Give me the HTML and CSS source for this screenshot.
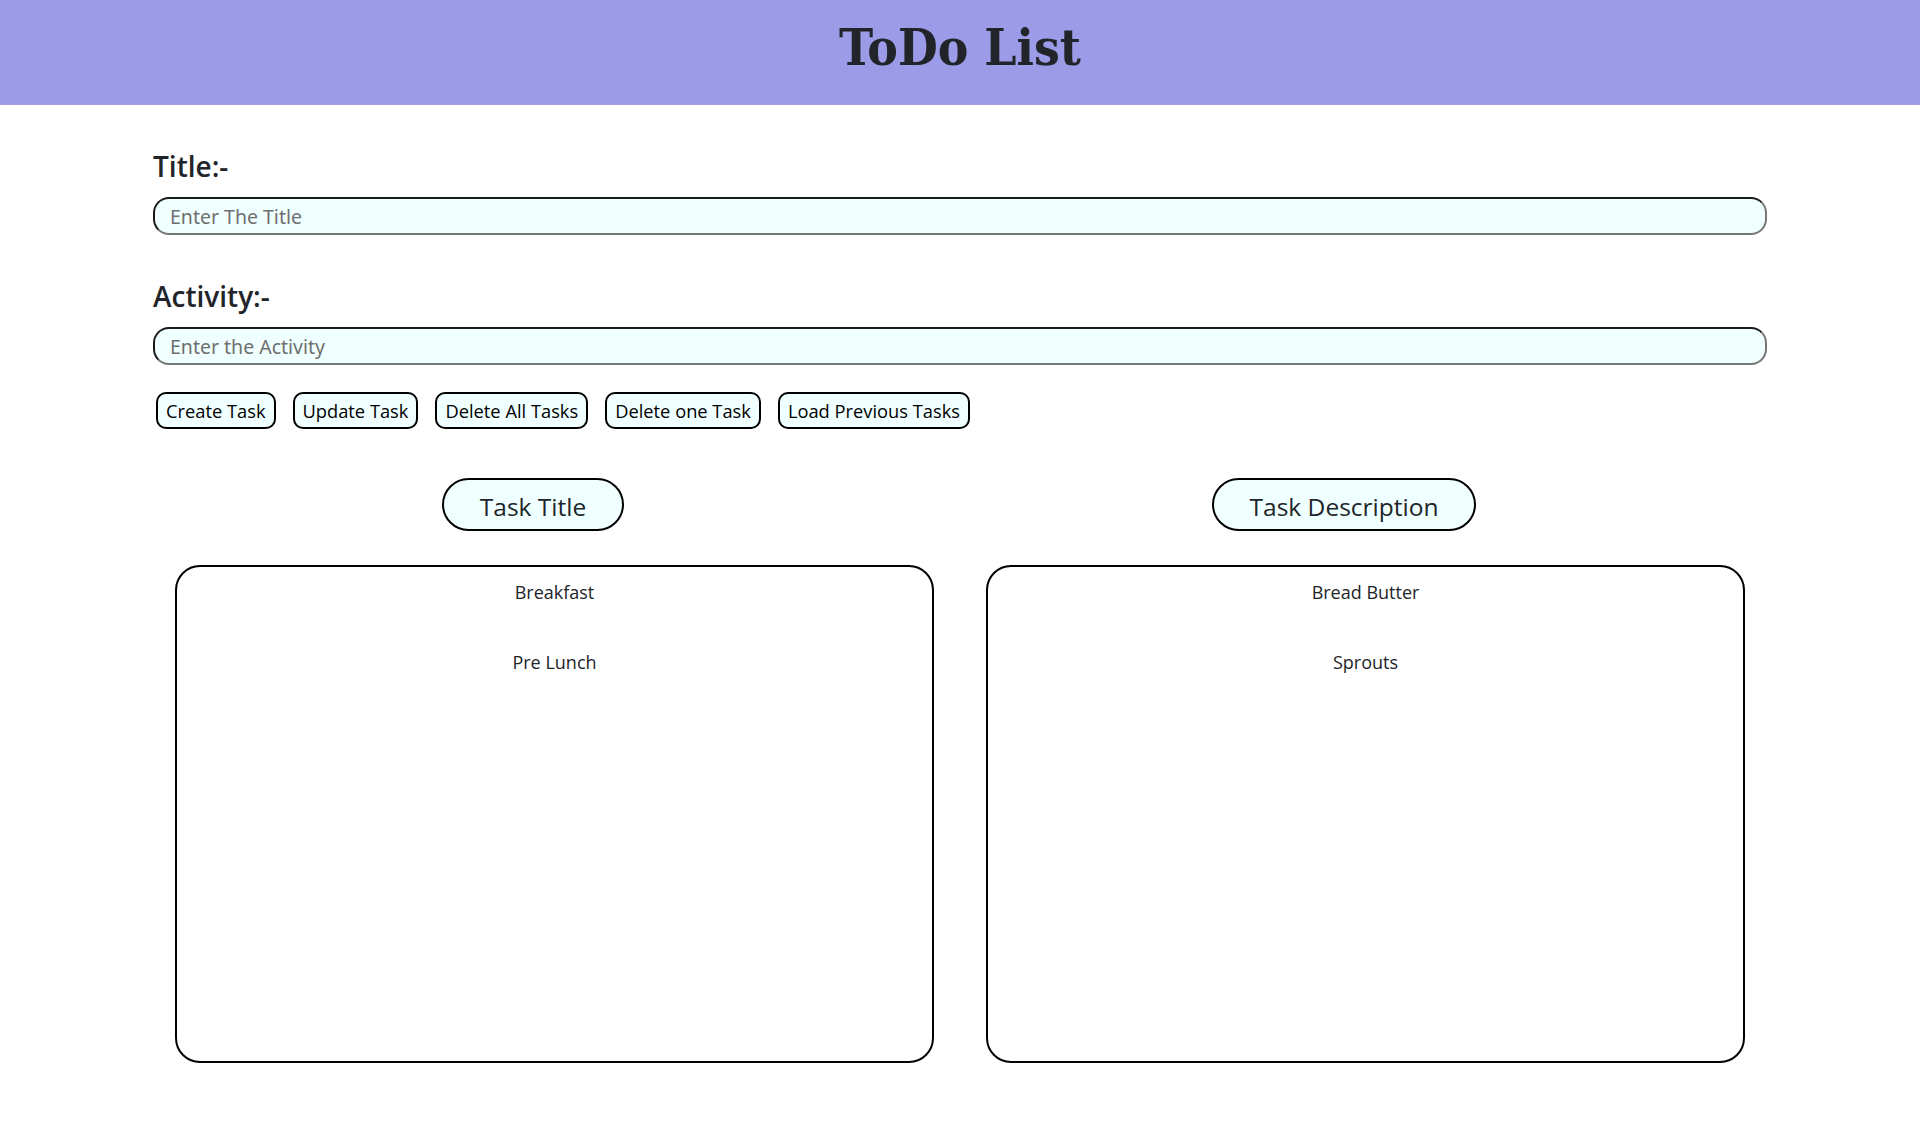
FILE: index.html
```html
<!DOCTYPE html>
<html lang="en">
<head>
<meta charset="utf-8">
<title>ToDo List</title>
<link rel="stylesheet" href="styles.css">
</head>
<body>
<header class="header">
  <h1 class="header-title">ToDo List</h1>
</header>
<main class="container">
  <label class="field-label" for="title">Title:-</label>
  <input class="field-input" id="title" type="text" placeholder="Enter The Title">
  <label class="field-label field-label-second" for="activity">Activity:-</label>
  <input class="field-input" id="activity" type="text" placeholder="Enter the Activity">
  <div class="actions">
    <button class="action-btn">Create Task</button>
    <button class="action-btn">Update Task</button>
    <button class="action-btn">Delete All Tasks</button>
    <button class="action-btn">Delete one Task</button>
    <button class="action-btn">Load Previous Tasks</button>
  </div>
  <div class="lists">
    <div class="list-head"><span class="pill">Task Title</span></div>
    <div class="list-head"><span class="pill">Task Description</span></div>
    <div class="list-box">
      <p class="list-item">Breakfast</p>
      <p class="list-item">Pre Lunch</p>
    </div>
    <div class="list-box">
      <p class="list-item">Bread Butter</p>
      <p class="list-item">Sprouts</p>
    </div>
  </div>
</main>
</body>
</html>
```
FILE: styles.css
```css
* { box-sizing: border-box; }

body {
  margin: 0;
  background: #ffffff;
  color: #212529;
  font-family: "Open Sans", "Noto Sans", sans-serif;
}

.header {
  height: 105px;
  background: #9b9be7;
  text-align: center;
}

.header-title {
  margin: 0;
  padding-top: 22px;
  font-family: "DejaVu Serif Condensed", "DejaVu Serif", serif;
  font-stretch: condensed;
  font-weight: 700;
  font-size: 51px;
  line-height: 51px;
  color: #212529;
}

.container {
  margin: 0 153px;
}

.field-label {
  display: block;
  margin-top: 44px;
  font-family: "Open Sans", "Noto Sans", sans-serif;
  font-weight: 600;
  font-size: 28px;
  line-height: 35px;
  color: #212529;
}

.field-input {
  display: block;
  width: 100%;
  height: 38px;
  margin-top: 13px;
  padding: 0 15px;
  border: 2px solid;
  border-color: #1a1a1a #767676 #767676 #1a1a1a;
  border-radius: 16px;
  background: #f0ffff;
  font-family: "Noto Sans", sans-serif;
  font-size: 19.5px;
  color: #212529;
  outline: none;
}

.field-input::placeholder {
  color: #6f6f6f;
}

.actions {
  display: flex;
  gap: 17px;
  margin-top: 27px;
  padding-left: 3px;
}

.action-btn {
  height: 37px;
  padding: 0 8px;
  border: 2px solid #000;
  border-radius: 10px;
  background: #f0ffff;
  font-family: "Open Sans", sans-serif;
  font-size: 18.3px;
  line-height: 25px;
  color: #000;
}

.lists {
  display: grid;
  grid-template-columns: 1fr 1fr;
  column-gap: 52px;
  padding: 0 22px;
  margin-top: 49px;
}

.list-head {
  display: flex;
  justify-content: center;
  padding-right: 43px;
}

.pill {
  display: flex;
  align-items: center;
  height: 53px;
  padding: 3px 36px 0;
  border: 2px solid #000;
  border-radius: 27px;
  background: #f0ffff;
  font-family: "Open Sans", sans-serif;
  font-size: 24.5px;
  color: #212529;
}

.list-box {
  height: 498px;
  margin-top: 34px;
  padding-top: 12px;
  border: 2px solid #000;
  border-radius: 25px;
  text-align: center;
}

.list-item {
  margin: 0 0 43px;
  font-family: "Open Sans", sans-serif;
  font-size: 18px;
  line-height: 27px;
  color: #212529;
}
```
